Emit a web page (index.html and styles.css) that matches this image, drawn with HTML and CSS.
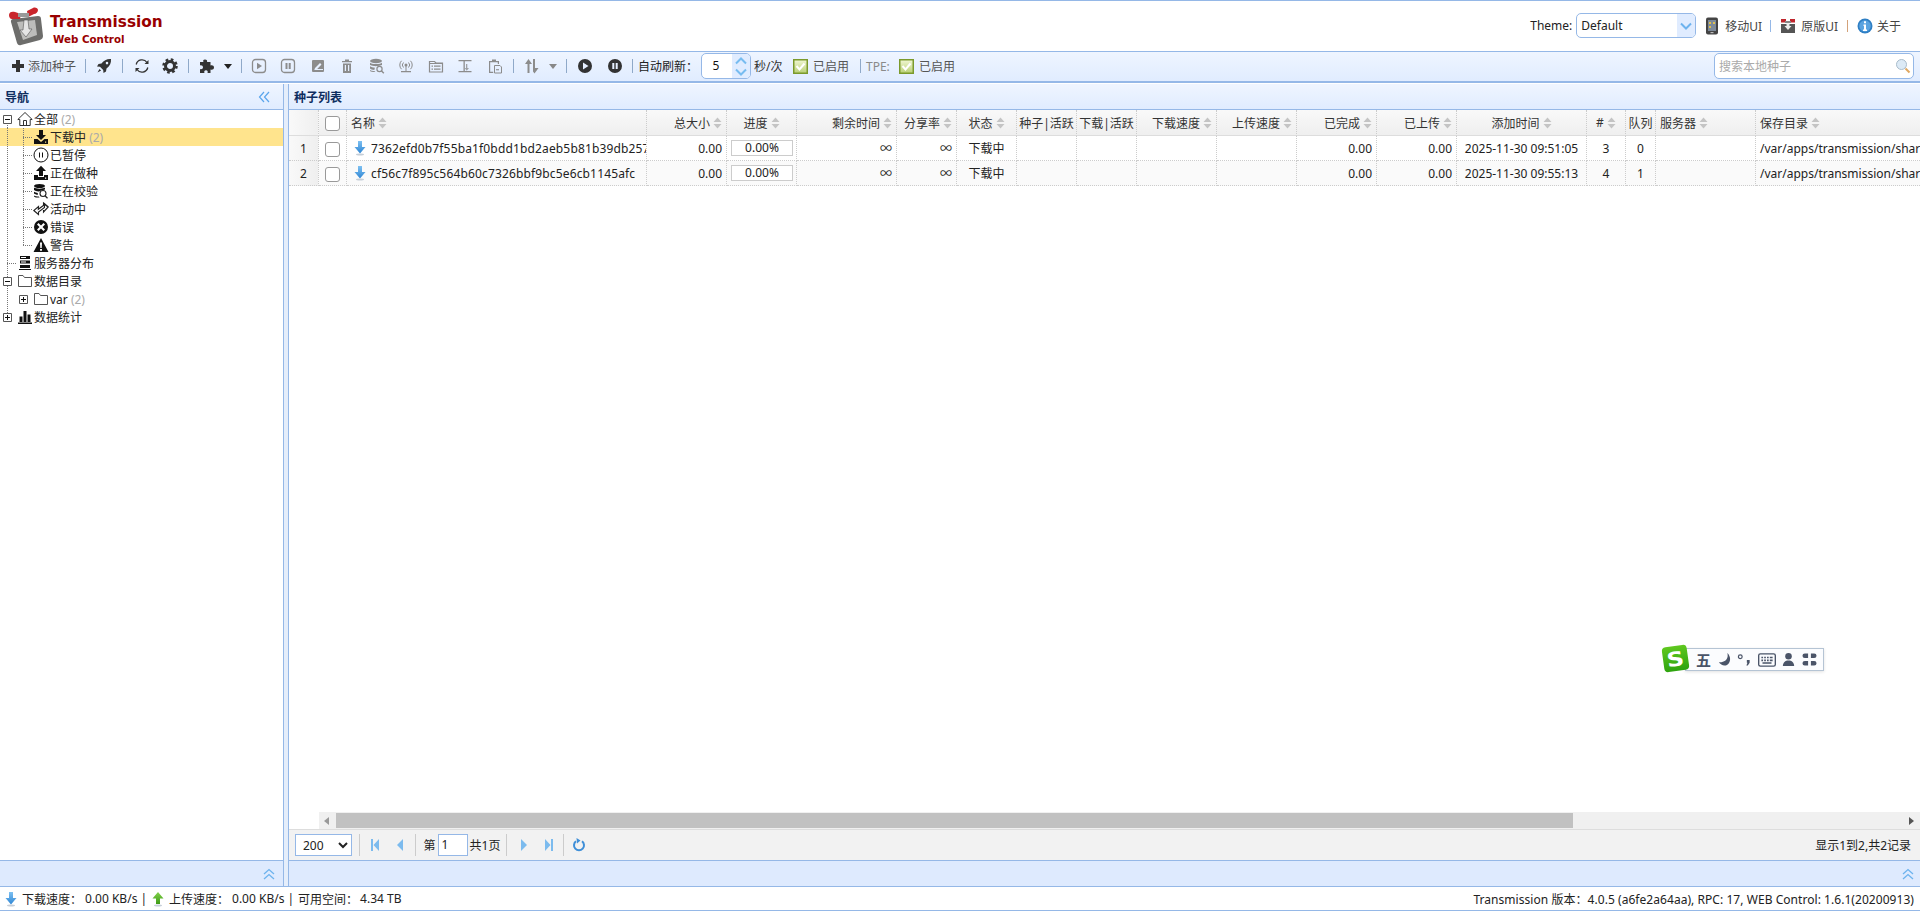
FILE: index.html
```html
<!DOCTYPE html>
<html lang="zh">
<head>
<meta charset="utf-8">
<title>Transmission Web Control</title>
<link rel="stylesheet" href="styles.css">
</head>
<body>
<svg class="defs" width="0" height="0">
  <defs>
    <symbol id="i-plus" viewBox="0 0 16 16"><path d="M6 2h4v4h4v4h-4v4H6v-4H2V6h4z"/></symbol>
    <symbol id="i-rocket" viewBox="0 0 16 16"><path d="M15 1c-4-.3-7 1.200-9.500 4.500L2.500 6 1 8.500l3 .3 3.200 3.200.3 3L10 13.500l.5-3C14 8 15.300 5 15 1zM11 3.800a1.300 1.300 0 1 1 0 2.600 1.300 1.300 0 0 1 0-2.600zM3.500 11l1.600 1.600-3.600 2z"/></symbol>
    <symbol id="i-refresh" viewBox="0 0 16 16"><path d="M2.200 6.500A6 6 0 0 1 13 4.500M13.800 9.500A6 6 0 0 1 3 11.500" fill="none" stroke="currentColor" stroke-width="1.300"/><path d="M14.500 2v4h-4zM1.500 14v-4h4z"/></symbol>
    <symbol id="i-gear" viewBox="0 0 16 16"><circle cx="8" cy="8" r="4.500" fill="none" stroke="currentColor" stroke-width="3"/><circle cx="8" cy="8" r="6.500" fill="none" stroke="currentColor" stroke-width="2.500" stroke-dasharray="2.600 2.500"/></symbol>
    <symbol id="i-puzzle" viewBox="0 0 16 16"><path d="M6 1.500c1.800 0 2.500 1 2 2.500h3.500v3.500c1.500-.7 3.500 0 3.500 2s-2 2.700-3.500 2V15H8.500c.7-1.500 0-2.800-1.500-2.800S4.800 13.500 5.500 15H1v-4c1.500.7 3-.2 3-1.700S2.500 7 1 7.500V4h3.500C3.700 2.500 4.300 1.500 6 1.500z"/></symbol>
    <symbol id="i-play-box" viewBox="0 0 16 16"><rect x="1.500" y="1.500" width="13" height="13" rx="3" fill="none" stroke="currentColor" stroke-width="1.300"/><path d="M6 4.800 11 8l-5 3.200z"/></symbol>
    <symbol id="i-pause-box" viewBox="0 0 16 16"><rect x="1.500" y="1.500" width="13" height="13" rx="3" fill="none" stroke="currentColor" stroke-width="1.300"/><path d="M5.500 5h2v6h-2zM8.700 5h2v6h-2z"/></symbol>
    <symbol id="i-edit" viewBox="0 0 16 16"><path d="M3 2h10a1 1 0 0 1 1 1v10a1 1 0 0 1-1 1H3a1 1 0 0 1-1-1V3a1 1 0 0 1 1-1zm7 3L5 10l-.7 2H13v-1H7.200L11.500 6.500z"/></symbol>
    <symbol id="i-trash" viewBox="0 0 16 16"><path d="M3 3h10v1.300H3zM4 5.500h8V15H4zm1.800 1.500v6h1.200V7zm3.200 0v6h1.200V7zM6 1.500h4V3H6z"/></symbol>
    <symbol id="i-db" viewBox="0 0 16 16"><ellipse cx="7" cy="3" rx="6" ry="2.200"/><path d="M1 4.500c1 2 11 2 12 0V7c-1 .5-2 .8-4 1-1.500.2-3 .2-4 0-2-.2-3.200-.6-4-1zM1 8.300c1 .9 3 1.300 5 1.400-.5.800-.7 1.500-.6 2.300-2.200-.2-3.600-.8-4.400-1.500zM1 12c.9.600 2.500 1.100 4.800 1.200l.6.900C4 14.200 2 13.700 1 13z"/><circle cx="10.500" cy="11" r="2.600" fill="none" stroke="currentColor" stroke-width="1.200"/><path d="m12.300 12.800 2.500 2.500" stroke="currentColor" stroke-width="1.400"/></symbol>
    <symbol id="i-antenna" viewBox="0 0 16 16"><circle cx="8" cy="7" r="1.500"/><path d="M5.500 4.500a3.500 3.500 0 0 0 0 5M10.500 4.500a3.500 3.500 0 0 1 0 5M3.500 2.800a6 6 0 0 0 0 8.400M12.500 2.800a6 6 0 0 1 0 8.400" fill="none" stroke="currentColor"/><path d="M7.500 8h1v5h-1zM3 13h10v1.200H3z"/></symbol>
    <symbol id="i-folder-list" viewBox="0 0 16 16"><path d="M1.500 3.500h5l1.500 1.500h6.500v9h-13z" fill="none" stroke="currentColor" stroke-width="1.200"/><path d="M1.500 5h13v1h-13zM3.500 7.500h1.500v1.200H3.500zM6 7.500h6.500v1.200H6zM3.500 10.500h1.500v1.200H3.500zM6 10.500h6.500v1.200H6z"/></symbol>
    <symbol id="i-align" viewBox="0 0 16 16"><path d="M1.500 2h13v1.300h-13zM1.500 13h13v1.300h-13zM6.500 3.300h1.300V13H6.500z"/><path d="M9 6h1.300v4H12l-2.300 2.700L7.800 10H9z" opacity=".8"/></symbol>
    <symbol id="i-paste" viewBox="0 0 16 16"><path d="M5 1.500h4v1.500h3v3h-1.200V4.300H3.200v9.400h3V15H2V3h3z"/><path d="M7.500 7.500h5.500l1.500 1.500v6h-7z" fill="none" stroke="currentColor"/><path d="M9 11.200h3v1.100H9z"/></symbol>
    <symbol id="i-updown" viewBox="0 0 16 16"><path d="M4.500 1 1 6h2.500v9h2V6H8zM9 1h2v9h3.500L10.500 15.500 9 13.500z"/></symbol>
    <symbol id="i-play-round" viewBox="0 0 16 16"><path d="M8 1a7 7 0 1 1 0 14A7 7 0 0 1 8 1zM6 4.500v7L11.500 8z"/></symbol>
    <symbol id="i-pause-round" viewBox="0 0 16 16"><path d="M8 1a7 7 0 1 1 0 14A7 7 0 0 1 8 1zM5.300 5v6h2V5zm3.400 0v6h2V5z"/></symbol>
    <symbol id="i-sort" viewBox="0 0 9 12"><path d="M4.500 0.500 8.500 5h-8zM4.500 11.500.5 7h8z"/></symbol>
    <symbol id="i-arrow" viewBox="0 0 12 16"><defs><linearGradient id="gb" x1="0" x2="0" y1="0" y2="1"><stop offset="0" stop-color="#7ec1f2"/><stop offset="1" stop-color="#2f86d4"/></linearGradient></defs><path d="M4 1h4v6h3.500L6 13.500.5 7H4z" fill="url(#gb)"/><ellipse cx="6" cy="14.500" rx="4" ry="1" fill="#c5ced8"/></symbol>
    <symbol id="i-arrow-up" viewBox="0 0 12 16"><defs><linearGradient id="gg" x1="0" x2="0" y1="0" y2="1"><stop offset="0" stop-color="#83d24b"/><stop offset="1" stop-color="#3e9b17"/></linearGradient></defs><path d="M6 1l5.500 6.500H8V13H4V7.500H.5z" fill="url(#gg)"/><ellipse cx="6" cy="14.500" rx="4" ry="1" fill="#c5ced8"/></symbol>
    <symbol id="i-double-left" viewBox="0 0 12 12"><path d="M6 1 1.500 6 6 11M11 1 6.500 6l4.500 5" fill="none" stroke="currentColor" stroke-width="1.200"/></symbol>
    <symbol id="i-double-up" viewBox="0 0 12 12"><path d="M1 6 6 1.500 11 6M1 11l5-4.500 5 4.500" fill="none" stroke="currentColor" stroke-width="1.300"/></symbol>
    <symbol id="i-home" viewBox="0 0 16 16"><path d="M8 1.500.8 8.500h2V14.500h10.400V8.500h2zM6.500 14.500v-5h3v5" fill="none" stroke="#333" stroke-width="1"/></symbol>
    <symbol id="i-download" viewBox="0 0 16 16"><path d="M6 1h4v5h3L8 11 3 6h3zM1 10h3.500L8 13l3.500-3H15v5H1zm11 2.500v1.200h1.200v-1.200z"/></symbol>
    <symbol id="i-pause-o" viewBox="0 0 16 16"><circle cx="8" cy="8" r="7" fill="none" stroke="#111" stroke-width="1"/><path d="M6 5.500h1v5H6zM9 5.500h1v5H9z"/></symbol>
    <symbol id="i-upload" viewBox="0 0 16 16"><path d="M8 0.800 13 6h-3v5H6V6H3zM1 10h4v2h6v-2h4v5H1zm11 2.500v1.200h1.200v-1.200z"/></symbol>
    <symbol id="i-check-db" viewBox="0 0 16 16"><ellipse cx="6.500" cy="3" rx="5.500" ry="2"/><path d="M1 4.500c1.500 1.500 9.500 1.500 11 0v2c-1 .5-2.500.8-4 .9-1.400.8-2 1.300-2.500 1.100C3.500 8.400 2 7.800 1 7zM1 8.800c1 .6 2.300 1 3.800 1.100-.1.700 0 1.300.2 1.900-1.800-.1-3.200-.6-4-1.300zM1 12.500c1 .6 2.700 1 4.800 1l.8 1.100c-2.700.1-4.600-.3-5.600-1.200z"/><circle cx="10" cy="10.500" r="3" fill="none" stroke="#222" stroke-width="1.100"/><path d="m12 12.700 2.500 2.500" stroke="#222" stroke-width="1.300"/></symbol>
    <symbol id="i-exchange" viewBox="0 0 16 16"><path d="M.8 9.500 5.500 13.500V11l6-4.500V3.700L5.300 8.300 5.500 5.500zM15.200 6 10.500 2v2.500" fill="none" stroke="#222" stroke-width="1.100"/><path d="M10.500 2 15.200 6l-4.700 5v-2" fill="none" stroke="#222" stroke-width="1.100"/></symbol>
    <symbol id="i-error" viewBox="0 0 16 16"><path d="M8 1a7 7 0 1 1 0 14A7 7 0 0 1 8 1zM5.500 4 4 5.500 6.500 8 4 10.500 5.500 12 8 9.500 10.500 12 12 10.500 9.500 8 12 5.500 10.500 4 8 6.500z"/></symbol>
    <symbol id="i-warn" viewBox="0 0 16 16"><path d="M8 1 15.500 15H.5zM7 5.500l.3 5.500h1.400L9 5.500zM7 12v1.800h2V12z"/></symbol>
    <symbol id="i-server" viewBox="0 0 16 16"><path d="M3 1h10v3H3zM3 5.500h10v3H3zM3 10h10v3H3zM2 14h12v1H2z"/><path d="M4 6.500h5v1H4zM4 2h5v1H4z" fill="#fff"/></symbol>
    <symbol id="i-folder" viewBox="0 0 16 16"><path d="M1.500 2.500h4.500l1.500 2h7v9h-13z" fill="#fff" stroke="#555" stroke-width="1"/></symbol>
    <symbol id="i-chart" viewBox="0 0 16 16"><path d="M1 13.500h14V15H1zM2.500 7.500h3V13h-3zM6.500 2h3v11h-3zM10.500 5.500h3V13h-3z"/></symbol>
    <symbol id="i-minus-box" viewBox="0 0 9 9"><path d="M.5.500h8v8h-8z" fill="#fff" stroke="#555"/><path d="M2 4h5v1H2z" fill="#111"/></symbol>
    <symbol id="i-plus-box" viewBox="0 0 9 9"><path d="M.5.500h8v8h-8z" fill="#fff" stroke="#555"/><path d="M2 4h5v1H2zM4 2h1v5H4z" fill="#111"/></symbol>
    <symbol id="i-check" viewBox="0 0 15 15"><defs><linearGradient id="gc" x1="0" x2="0" y1="0" y2="1"><stop offset="0" stop-color="#eef5cf"/><stop offset="1" stop-color="#bcd27a"/></linearGradient></defs><rect width="15" height="15" fill="#7b9a2c"/><rect x="1.500" y="1.500" width="12" height="12" fill="url(#gc)"/><path d="M3.500 7 6.500 10.500 11.500 4.500" fill="none" stroke="#fff" stroke-width="2"/></symbol>
    <symbol id="i-first" viewBox="0 0 10 14"><path d="M1 1h2v12H1zM9 1v12L3.500 7z"/></symbol>
    <symbol id="i-prev" viewBox="0 0 10 14"><path d="M8 1v12L2 7z"/></symbol>
    <symbol id="i-next" viewBox="0 0 10 14"><path d="M2 1v12l6-6z"/></symbol>
    <symbol id="i-last" viewBox="0 0 10 14"><path d="M9 1H7v12h2zM1 1v12l5.500-6z"/></symbol>
    <symbol id="i-reload" viewBox="0 0 14 14"><path d="M4 3.300a5 5 0 1 0 6 0" fill="none" stroke="currentColor" stroke-width="2"/><path d="M4.500 0l4 2.500-3.500 3z"/></symbol>
    <symbol id="i-search" viewBox="0 0 16 16"><circle cx="6.500" cy="6.500" r="5" fill="#dceaf6" stroke="#a9bccb"/><path d="m10.500 10.500 4 4" stroke="#e0a860" stroke-width="2"/></symbol>
    <symbol id="i-chevron" viewBox="0 0 12 8"><path d="M1 1.500 6 6.500 11 1.500" fill="none" stroke="currentColor" stroke-width="2"/></symbol>
    <symbol id="i-mobile" viewBox="0 0 14 18"><rect x="1" y="0.500" width="12" height="17" rx="2" fill="#444"/><rect x="3" y="3" width="8" height="11" fill="#7d8a99"/><path d="M4 5h2v2H4zM8 5h2v2H8zM4 9h2v2H4z" fill="#e0c050"/><rect x="5.500" y="15" width="3" height="1.200" fill="#bbb"/></symbol>
    <symbol id="i-original" viewBox="0 0 16 16"><path d="M1 6h14v9H1z" fill="#555"/><path d="M1 1h5v3.500H1zM10 1h5v3.500h-5z" fill="#c0272d"/><path d="M5 3h6v2H5z" fill="#888"/><path d="M6.500 5h3v3h2L8 12 4.500 8h2z" fill="#eee"/></symbol>
    <symbol id="i-info" viewBox="0 0 16 16"><circle cx="8" cy="8" r="7.500" fill="#2f7fc4"/><circle cx="8" cy="8" r="5.800" fill="#5aa3e0"/><path d="M7 3.200h2v2H7zM6.500 6.500H9V11.500h1V13H6V11.500h1V8H6.500z" fill="#fff"/></symbol>
    <symbol id="i-logo" viewBox="0 0 36 40"><path d="M5 12 30 9c2 0 3 1 3 3l2 17c0 2-1 3-3 4l-19 5c-2 .5-3 0-4-2L3 15c-.5-1.500.5-3 2-3z" fill="#6d6d6b"/><path d="M9 15 27 13l2 15-14 5z" fill="#bdbdbb"/><path d="M16 13h4l1 9h3l-6 8-6-7h3z" fill="#e5e5e5" stroke="#555" stroke-width=".6"/><path d="M1 8c0-3 3-4 6-3l6 2-1 5-8 0C2 12 1 10 1 8zM19 4l6-3c2-1 5 0 5 2s-2 4-4 4l-6 3z" fill="#c9252b"/><path d="M10 6h11v4H10z" fill="#999"/></symbol>
    <symbol id="s-moon" viewBox="0 0 16 16"><path d="M11 1c1.500 5-1 10-9 10 2 3 6 4.500 9 2.500 4-2.500 4-9 0-12.500z"/></symbol>
    <symbol id="s-punct" viewBox="0 0 16 16"><circle cx="3.500" cy="5" r="2" fill="none" stroke="currentColor" stroke-width="1.300"/><path d="M10.500 8.500h3v3l-2 3h-1.500l1.200-3h-.7z"/></symbol>
    <symbol id="s-keys" viewBox="0 0 16 16"><rect x="0.600" y="2.600" width="14.800" height="10.800" rx="1.500" fill="none" stroke="currentColor" stroke-width="1.200"/><path d="M3 5h1.500v1.500H3zM5.500 5H7v1.500H5.500zM8 5h1.500v1.500H8zM10.500 5H13v1.500h-2.500zM3 7.500h1.500V9H3zM5.500 7.500H7V9H5.500zM8 7.500h1.500V9H8zM10.500 7.500H13V9h-2.500zM4 10h8v1.300H4z"/></symbol>
    <symbol id="s-user" viewBox="0 0 16 16"><circle cx="8" cy="4.500" r="3.500"/><path d="M2 15c0-4 2.500-6 6-6s6 2 6 6z"/></symbol>
    <symbol id="s-apps" viewBox="0 0 16 16"><path d="M3 1.500h3.500v5H3A2.500 2.500 0 0 1 3 1.500zM9.500 1.500H13a2.500 2.500 0 0 1 0 5H9.500zM3 9.500h3.500v5H3a2.500 2.500 0 0 1 0-5zM9.500 9.500H13a2.500 2.500 0 0 1 0 5H9.500z"/></symbol>
  </defs>
</svg>

<div class="app">
  <header class="top">
    <div class="brand">
      <svg class="logo"><use href="#i-logo"/></svg>
      <div class="brand-text">
        <div class="brand-name">Transmission</div>
        <div class="brand-sub">Web Control</div>
      </div>
    </div>
    <div class="top-right">
      <span class="theme-label">Theme:</span>
      <div class="combo"><span class="combo-text">Default</span><span class="combo-arrow"><svg class="chev"><use href="#i-chevron"/></svg></span></div>
      <svg class="ic-mobile"><use href="#i-mobile"/></svg><span class="top-link t-mobile">移动UI</span>
      <span class="top-sep sep-a"></span>
      <svg class="ic-orig"><use href="#i-original"/></svg><span class="top-link t-orig">原版UI</span>
      <span class="top-sep sep-orange"></span>
      <svg class="ic-info"><use href="#i-info"/></svg><span class="top-link t-about">关于</span>
    </div>
  </header>

  <div class="toolbar">
    <div class="tb-add"><svg class="ic dark ic-plus"><use href="#i-plus"/></svg><span>添加种子</span></div>
    <i class="sep"></i>
    <div class="btn w36"><svg class="ic dark"><use href="#i-rocket"/></svg></div>
    <i class="sep"></i>
    <div class="btn w37"><svg class="ic dark"><use href="#i-refresh"/></svg></div>
    <div class="btn w20 mr8"><svg class="ic dark"><use href="#i-gear"/></svg></div>
    <i class="sep"></i>
    <div class="group"><svg class="ic dark"><use href="#i-puzzle"/></svg><span class="caret"></span></div>
    <i class="sep"></i>
    <div class="disabled-set">
      <div class="btn w295"><svg class="ic off"><use href="#i-play-box"/></svg></div>
      <div class="btn w295"><svg class="ic off"><use href="#i-pause-box"/></svg></div>
      <div class="btn w295"><svg class="ic off"><use href="#i-edit"/></svg></div>
      <div class="btn w295"><svg class="ic off"><use href="#i-trash"/></svg></div>
      <div class="btn w295"><svg class="ic off"><use href="#i-db"/></svg></div>
      <div class="btn w295"><svg class="ic off"><use href="#i-antenna"/></svg></div>
      <div class="btn w295"><svg class="ic off"><use href="#i-folder-list"/></svg></div>
      <div class="btn w295"><svg class="ic off"><use href="#i-align"/></svg></div>
      <div class="btn w295"><svg class="ic off"><use href="#i-paste"/></svg></div>
    </div>
    <i class="sep"></i>
    <div class="group"><svg class="ic off"><use href="#i-updown"/></svg><span class="caret caret-off"></span></div>
    <i class="sep"></i>
    <div class="round-set">
      <div class="btn w30"><svg class="ic dark"><use href="#i-play-round"/></svg></div>
      <div class="btn w30"><svg class="ic dark"><use href="#i-pause-round"/></svg></div>
    </div>
    <i class="sep"></i>
    <span class="lbl-auto">自动刷新：</span>
    <div class="spinner"><span class="spin-val">5</span><span class="spin-btns"><svg class="spin-up"><use href="#i-chevron"/></svg><svg class="spin-dn"><use href="#i-chevron"/></svg></span></div>
    <span class="lbl-sec">秒/次</span>
    <svg class="chk chk-a"><use href="#i-check"/></svg><span class="lbl-on">已启用</span>
    <i class="sep sep-tpe"></i>
    <span class="lbl-tpe">TPE:</span>
    <svg class="chk chk-b"><use href="#i-check"/></svg><span class="lbl-on">已启用</span>
    <div class="search"><span class="search-ph">搜索本地种子</span><svg class="ic-search"><use href="#i-search"/></svg></div>
  </div>

  <div class="main">
    <aside class="nav">
      <div class="panel-title nav-title"><span>导航</span><svg class="ic-collapse"><use href="#i-double-left"/></svg></div>
      <div class="tree">
        <div class="node"><span class="hit vd hd-half"><svg class="box"><use href="#i-minus-box"/></svg></span><svg class="ti"><use href="#i-home"/></svg><span class="tx">全部 <em>(2)</em></span></div>
        <div class="node active"><span class="hit vd"></span><span class="hit vd hj"></span><svg class="ti"><use href="#i-download"/></svg><span class="tx">下载中 <em>(2)</em></span></div>
        <div class="node"><span class="hit vd"></span><span class="hit vd hj"></span><svg class="ti"><use href="#i-pause-o"/></svg><span class="tx">已暂停</span></div>
        <div class="node"><span class="hit vd"></span><span class="hit vd hj"></span><svg class="ti"><use href="#i-upload"/></svg><span class="tx">正在做种</span></div>
        <div class="node"><span class="hit vd"></span><span class="hit vd hj"></span><svg class="ti"><use href="#i-check-db"/></svg><span class="tx">正在校验</span></div>
        <div class="node"><span class="hit vd"></span><span class="hit vd hj"></span><svg class="ti"><use href="#i-exchange"/></svg><span class="tx">活动中</span></div>
        <div class="node"><span class="hit vd"></span><span class="hit vd hj"></span><svg class="ti"><use href="#i-error"/></svg><span class="tx">错误</span></div>
        <div class="node"><span class="hit vd"></span><span class="hit vhalf hj"></span><svg class="ti"><use href="#i-warn"/></svg><span class="tx">警告</span></div>
        <div class="node"><span class="hit vd hj"></span><svg class="ti"><use href="#i-server"/></svg><span class="tx">服务器分布</span></div>
        <div class="node"><span class="hit vd"><svg class="box"><use href="#i-minus-box"/></svg></span><svg class="ti"><use href="#i-folder"/></svg><span class="tx">数据目录</span></div>
        <div class="node"><span class="hit vd"></span><span class="hit"><svg class="box"><use href="#i-plus-box"/></svg></span><svg class="ti"><use href="#i-folder"/></svg><span class="tx">var <em>(2)</em></span></div>
        <div class="node"><span class="hit vhalf"><svg class="box"><use href="#i-plus-box"/></svg></span><svg class="ti"><use href="#i-chart"/></svg><span class="tx">数据统计</span></div>
      </div>
    </aside>
    <div class="splitter"></div>
    <section class="content">
      <div class="panel-title"><span>种子列表</span></div>
      <div class="grid-wrap">
        <table class="grid">
          <colgroup>
            <col class="c30"><col class="c27"><col class="c300"><col class="c80"><col class="c70"><col class="c100"><col class="c60"><col class="c60"><col class="c60"><col class="c60"><col class="c80"><col class="c80"><col class="c80"><col class="c80"><col class="c130"><col class="c40"><col class="c30"><col class="c100"><col class="c350">
          </colgroup>
          <thead>
            <tr>
              <th class="rn"></th>
              <th class="cb"><span class="check"></span></th>
              <th class="l"><span class="h">名称<svg class="sort"><use href="#i-sort"/></svg></span></th>
              <th class="r"><span class="h">总大小<svg class="sort"><use href="#i-sort"/></svg></span></th>
              <th class="m"><span class="h">进度<svg class="sort"><use href="#i-sort"/></svg></span></th>
              <th class="r"><span class="h">剩余时间<svg class="sort"><use href="#i-sort"/></svg></span></th>
              <th class="r"><span class="h">分享率<svg class="sort"><use href="#i-sort"/></svg></span></th>
              <th class="m"><span class="h">状态<svg class="sort"><use href="#i-sort"/></svg></span></th>
              <th class="m tight">种子|活跃</th>
              <th class="m tight">下载|活跃</th>
              <th class="r"><span class="h">下载速度<svg class="sort"><use href="#i-sort"/></svg></span></th>
              <th class="r"><span class="h">上传速度<svg class="sort"><use href="#i-sort"/></svg></span></th>
              <th class="r"><span class="h">已完成<svg class="sort"><use href="#i-sort"/></svg></span></th>
              <th class="r"><span class="h">已上传<svg class="sort"><use href="#i-sort"/></svg></span></th>
              <th class="m"><span class="h">添加时间<svg class="sort"><use href="#i-sort"/></svg></span></th>
              <th class="m"><span class="h">#<svg class="sort"><use href="#i-sort"/></svg></span></th>
              <th class="m tight">队列</th>
              <th class="l"><span class="h">服务器<svg class="sort"><use href="#i-sort"/></svg></span></th>
              <th class="l"><span class="h">保存目录<svg class="sort"><use href="#i-sort"/></svg></span></th>
            </tr>
          </thead>
          <tbody>
            <tr>
              <td class="rn">1</td><td class="cb"><span class="check"></span></td>
              <td class="l flush"><span class="name"><svg class="row-arrow"><use href="#i-arrow"/></svg><span class="name-text">7362efd0b7f55ba1f0bdd1bd2aeb5b81b39db257a</span></span></td>
              <td class="r">0.00</td><td class="m"><span class="progress">0.00%</span></td><td class="r">∞</td><td class="r">∞</td><td class="m">下载中</td><td></td><td></td><td></td><td></td><td class="r">0.00</td><td class="r">0.00</td><td class="m">2025-11-30 09:51:05</td><td class="m">3</td><td class="m">0</td><td></td><td class="l">/var/apps/transmission/shared/downloads</td>
            </tr>
            <tr class="even">
              <td class="rn">2</td><td class="cb"><span class="check"></span></td>
              <td class="l flush"><span class="name"><svg class="row-arrow"><use href="#i-arrow"/></svg><span class="name-text">cf56c7f895c564b60c7326bbf9bc5e6cb1145afc</span></span></td>
              <td class="r">0.00</td><td class="m"><span class="progress">0.00%</span></td><td class="r">∞</td><td class="r">∞</td><td class="m">下载中</td><td></td><td></td><td></td><td></td><td class="r">0.00</td><td class="r">0.00</td><td class="m">2025-11-30 09:55:13</td><td class="m">4</td><td class="m">1</td><td></td><td class="l">/var/apps/transmission/shared/downloads</td>
            </tr>
          </tbody>
        </table>
      </div>
      <div class="hscroll">
        <div class="track"><span class="arr-l"></span><span class="thumb"></span><span class="arr-r"></span></div>
      </div>
      <div class="pager">
        <select class="page-size"><option>200</option></select>
        <i class="psep s1"></i>
        <svg class="pg pg-a"><use href="#i-first"/></svg>
        <svg class="pg pg-b"><use href="#i-prev"/></svg>
        <i class="psep s2"></i>
        <span class="pt-a">第</span><span class="page-input">1</span><span class="pt-b">共1页</span>
        <i class="psep s3"></i>
        <svg class="pg pg-c"><use href="#i-next"/></svg>
        <svg class="pg pg-d"><use href="#i-last"/></svg>
        <i class="psep s4"></i>
        <svg class="pg-reload"><use href="#i-reload"/></svg>
        <span class="page-info">显示1到2,共2记录</span>
      </div>
    </section>
  </div>

  <div class="bottoms">
    <div class="bot bot-l"><svg class="ic-up"><use href="#i-double-up"/></svg></div>
    <div class="bot-gap"></div>
    <div class="bot bot-r"><svg class="ic-up"><use href="#i-double-up"/></svg></div>
  </div>

  <footer class="status">
    <svg class="st-arrow"><use href="#i-arrow"/></svg>
    <span class="st-a">下载速度：</span><span class="st-v">0.00 KB/s</span><span class="st-s">|</span>
    <svg class="st-arrow st-green"><use href="#i-arrow-up"/></svg>
    <span class="st-a">上传速度：</span><span class="st-v">0.00 KB/s</span><span class="st-s">|</span>
    <span class="st-a st-c">可用空间：</span><span class="st-v st-w">4.34 TB</span>
    <span class="st-right">Transmission 版本：4.0.5 (a6fe2a64aa), RPC: 17, WEB Control: 1.6.1(20200913)</span>
  </footer>
</div>

<div class="ime">
  <span class="ime-logo"><span>S</span></span>
  <span class="ime-wu">五</span>
  <svg class="ime-ic"><use href="#s-moon"/></svg>
  <svg class="ime-ic"><use href="#s-punct"/></svg>
  <svg class="ime-ic ime-keys"><use href="#s-keys"/></svg>
  <svg class="ime-ic"><use href="#s-user"/></svg>
  <svg class="ime-ic"><use href="#s-apps"/></svg>
</div>
</body>
</html>
```

FILE: styles.css
```css
* { box-sizing: border-box; }
html, body { margin: 0; height: 100%; overflow: hidden; }
body {
  font-family: "Noto Sans", "Noto Sans CJK SC", sans-serif;
  font-size: 12px;
  color: #222;
  background: #fff;
}
.defs { position: absolute; }
.app { display: flex; flex-direction: column; height: 911px; width: 1920px; }

/* top header */
.top {
  height: 52px; flex: none; display: flex; justify-content: space-between;
  border-top: 1px solid #95b8e7; border-bottom: 1px solid #95b8e7; background: #fff;
}
.brand { display: flex; padding: 6px 0 0 8px; }
.logo { width: 36px; height: 40px; }
.brand-text { margin-left: 6px; padding-top: 4px; }
.brand-name { font-family: "DejaVu Sans", sans-serif; font-weight: 700; font-size: 15.3px; line-height: 20px; color: #990000; margin-top: 1px; }
.brand-sub { font-family: "DejaVu Sans", sans-serif; font-weight: 700; font-size: 10.3px; line-height: 14px; color: #990000; margin-left: 3px; }
.top-right { display: flex; align-items: center; padding-bottom: 1px; }
.theme-label { margin-right: 4px; }
.combo { width: 120px; height: 25px; border: 1px solid #95b8e7; border-radius: 5px; display: flex; overflow: hidden; background: #fff; }
.combo-text { flex: 1; padding-left: 4px; line-height: 23px; font-size: 12px; color: #222; }
.combo-arrow { width: 18px; background: #e0ecff; display: flex; align-items: center; justify-content: center; color: #6db3ee; }
.chev { width: 12px; height: 8px; }
.ic-mobile { width: 14px; height: 18px; margin-left: 9px; }
.top-link { color: #444; }
.t-mobile { margin-left: 6px; }
.top-sep { width: 1px; height: 12px; background: #95b8e7; margin: 0 9px; }
.sep-a { margin: 0 9px 0 8px; }
.sep-orange { background: #d3a27a; }
.ic-orig { width: 16px; height: 16px; }
.t-orig { margin-left: 5px; }
.ic-info { width: 16px; height: 16px; }
.t-about { margin: 0 19px 0 4px; }

/* toolbar */
.toolbar {
  height: 31px; flex: none; display: flex; align-items: center; padding-bottom: 1px;
  background: linear-gradient(#eff5ff, #e0ecff); border-bottom: 2px solid #95b8e7; color: #333;
}
.tb-add { width: 85px; padding-left: 10px; display: flex; align-items: center; color: #555; }
.ic { width: 16px; height: 16px; display: block; }
.ic-plus { margin-right: 2px; }
.dark { color: #333; fill: #333; }
.off { color: #8c8c8c; fill: #8c8c8c; }
.sep { display: block; width: 1px; height: 14px; background: #8fa9c9; flex: none; }
.btn { display: flex; justify-content: center; flex: none; }
.w36 { width: 36px; } .w37 { width: 37px; } .w20 { width: 20px; } .mr8 { margin-right: 8px; }
.w30 { width: 30px; } .w295 { width: 29.5px; }
.group { width: 52px; display: flex; align-items: center; padding-left: 10px; flex: none; }
.caret { width: 0; height: 0; margin-left: 9px; border: 4px solid transparent; border-top: 5px solid #222; border-bottom: 0; }
.caret-off { border-top-color: #888; }
.disabled-set { display: flex; padding-left: 2px; width: 271px; flex: none; }
.round-set { display: flex; padding-left: 3px; width: 65px; flex: none; }
.lbl-auto { margin-left: 5px; width: 63px; flex: none; color: #222; }
.spinner { width: 50px; height: 26px; flex: none; border: 1px solid #95b8e7; border-radius: 5px; display: flex; overflow: hidden; background: #fff; }
.spin-val { flex: 1; text-align: center; line-height: 24px; color: #111; padding-right: 2px; }
.spin-btns { width: 18px; background: #e0ecff; display: flex; flex-direction: column; align-items: center; justify-content: center; gap: 3px; color: #77bcf0; }
.spin-up { width: 12px; height: 8px; transform: scaleY(-1); }
.spin-dn { width: 12px; height: 8px; }
.lbl-sec { margin-left: 3px; width: 39px; flex: none; color: #333; }
.chk { width: 15px; height: 15px; flex: none; }
.lbl-on { margin-left: 5px; color: #555; width: 36px; flex: none; }
.sep-tpe { margin-left: 11px; }
.lbl-tpe { margin-left: 5px; color: #8a8a8a; width: 33px; flex: none; }
.search { margin-left: auto; margin-right: 6px; width: 200px; height: 26px; background: #fff; border: 1px solid #95b8e7; border-radius: 5px; display: flex; align-items: center; justify-content: space-between; padding: 0 2px 0 4px; }
.search-ph { color: #aaa; }
.ic-search { width: 16px; height: 16px; }

/* main */
.main { flex: 1; display: flex; min-height: 0; padding-top: 1px; background: #fff; }
.nav { width: 284px; flex: none; display: flex; flex-direction: column; border-right: 1px solid #95b8e7; }
.panel-title {
  height: 26px; flex: none; display: flex; align-items: center; justify-content: space-between;
  padding: 0 5px; font-weight: 700; color: #0e2d5f; font-size: 12px;
  background: linear-gradient(#eff5ff, #e0ecff); border-bottom: 1px solid #95b8e7;
}
.nav-title { padding-right: 13px; }
.ic-collapse { width: 12px; height: 12px; color: #5aa5ec; }
.tree { flex: 1; background: #fff; }
.node { height: 18px; display: flex; align-items: center; }
.node.active { background: #ffe48d; }
.hit { width: 16px; height: 18px; flex: none; display: flex; align-items: center; justify-content: flex-start; padding-left: 3px; }
.vd { background: repeating-linear-gradient(#777 0 1px, transparent 1px 2px) 7px 0 / 1px 100% no-repeat; }
.vhalf { background: repeating-linear-gradient(#777 0 1px, transparent 1px 2px) 7px 0 / 1px 9px no-repeat; }
.hj { background-image: repeating-linear-gradient(#777 0 1px, transparent 1px 2px), repeating-linear-gradient(90deg, #777 0 1px, transparent 1px 2px); background-position: 7px 0, 7px 9px; background-size: 1px 100%, 9px 1px; background-repeat: no-repeat; }
.vhalf.hj { background-size: 1px 9px, 9px 1px; }
.hd-half { background-size: 1px 9px; background-position: 7px 9px; }
.box { width: 9px; height: 9px; display: block; }
.ti { width: 16px; height: 16px; flex: none; fill: #111; margin-left: 1px; }
.tx { margin-left: 1px; color: #222; white-space: nowrap; }
.tx em { font-style: normal; color: #aaa; }
.splitter { width: 4px; flex: none; background: #e5eefb; }

.content { flex: 1; min-width: 0; display: flex; flex-direction: column; border-left: 1px solid #95b8e7; }
.grid-wrap { flex: 1; min-height: 0; overflow: hidden; background: #fff; }
.grid { table-layout: fixed; border-collapse: separate; border-spacing: 0; width: 1817px; }
.c27 { width: 28px; } .c30 { width: 30px; } .c40 { width: 39px; } .c60 { width: 60px; } .c70 { width: 70px; }
.c80 { width: 80px; } .c100 { width: 100px; } .c130 { width: 130px; } .c300 { width: 300px; } .c350 { width: 350px; }
.grid th, .grid td { border-right: 1px dotted #ccc; border-bottom: 1px dotted #ccc; padding: 0 4px; white-space: nowrap; overflow: hidden; font-weight: 400; }
.grid th { height: 26px; background: linear-gradient(#f9f9f9, #efefef); border-bottom: 1px solid #ddd; color: #333; }
.grid td { height: 25px; color: #222; }
.grid td.flush { padding-right: 0; }
.even td { background: #fafafa; }
.grid .rn { background: linear-gradient(90deg, #f9f9f9, #efefef); text-align: center; }
.grid .cb { text-align: center; padding: 0; }
.l { text-align: left; } .r { text-align: right; } .m { text-align: center; }
.grid th.tight { padding: 0; }
.h { display: inline-flex; align-items: center; }
.sort { width: 9px; height: 12px; fill: #c4c4c4; margin-left: 3px; }
.check { display: inline-block; width: 15px; height: 15px; border: 1px solid #999; border-radius: 3px; background: #fff; vertical-align: middle; }
.name { display: flex; align-items: center; padding-left: 3px; overflow: hidden; }
.row-arrow { width: 12px; height: 16px; flex: none; margin-right: 5px; }
.name-text { overflow: hidden; white-space: nowrap; letter-spacing: .15px; }
.progress { display: block; height: 16px; line-height: 14px; border: 1px solid #ccc; text-align: center; background: #fff; margin-right: -1px; }

.hscroll { height: 17px; flex: none; padding-left: 30px; background: #fff; }
.track { height: 100%; background: #f0f0f0; display: flex; align-items: center; }
.arr-l, .arr-r { width: 0; height: 0; border: 4px solid transparent; flex: none; }
.arr-l { border-right: 5px solid #999; border-left: 0; margin-left: 5px; }
.arr-r { border-left: 5px solid #555; border-right: 0; margin-left: auto; margin-right: 6px; }
.thumb { width: 1237px; height: 15px; background: #c1c1c1; margin-left: 7px; }

.pager { height: 31px; flex: none; display: flex; align-items: center; background: #f2f2f2; border-top: 1px solid #ddd; padding-left: 6px; color: #222; }
.page-size { width: 57px; height: 22px; border: 1px solid #95b8e7; background: #fff; font: inherit; padding-left: 3px; border-radius: 0; color: #222; }
.psep { display: block; width: 1px; height: 22px; background: #ccc; flex: none; }
.s1 { margin-left: 7px; }
.pg { width: 10px; height: 14px; fill: #7cbbee; flex: none; }
.pg-a { margin-left: 10px; }
.pg-b { margin-left: 15px; }
.s2 { margin-left: 9.5px; }
.pt-a { margin-left: 8px; }
.page-input { width: 30px; height: 22px; border: 1px solid #95b8e7; background: #fff; margin: 0 2px; padding-left: 3px; line-height: 20px; }
.s3 { margin-left: 6px; }
.pg-c { margin-left: 12px; }
.pg-d { margin-left: 15px; }
.s4 { margin-left: 9px; }
.pg-reload { width: 14px; height: 14px; margin-left: 8px; color: #3f8fd8; fill: #3f8fd8; }
.page-info { margin-left: auto; margin-right: 9px; }

/* bottom collapsed panels */
.bottoms { height: 27px; flex: none; display: flex; }
.bot { border-top: 1px solid #95b8e7; border-bottom: 1px solid #95b8e7; background: #deeafe; display: flex; align-items: center; justify-content: flex-end; }
.bot-l { width: 284px; border-right: 1px solid #95b8e7; padding-right: 8px; }
.bot-gap { width: 4px; background: #e5eefb; border-bottom: 1px solid #95b8e7; }
.bot-r { flex: 1; border-left: 1px solid #95b8e7; padding-right: 6px; }
.ic-up { width: 12px; height: 12px; color: #6db3ee; }

/* status */
.status { height: 24px; flex: none; display: flex; align-items: center; padding-left: 5px; border-bottom: 1px solid #95b8e7; color: #222; }
.st-arrow { width: 12px; height: 16px; flex: none; }
.st-a { margin-left: 5px; color: #222; }
.st-c { margin-left: 1px; }
.st-v { margin-left: 3px; }
.st-w { margin-left: 2px; }
.st-s { margin: 0 3px; }
.st-green { margin-left: 2px; }
.st-right { margin-left: auto; margin-right: 6px; letter-spacing: .05px; }

/* floating IME bar */
.ime {
  position: absolute; left: 1685px; top: 648px; width: 139px; height: 23px;
  display: flex; align-items: center; justify-content: space-between; padding: 0 6px 0 10px;
  background: #fbfcfe; border: 1px solid #b5c4d4; box-shadow: 0 1px 3px rgba(0,0,0,.12); color: #4a5468; fill: #4a5468;
}
.ime-logo { position: absolute; left: -23px; top: -3px; width: 25px; height: 25px; background: linear-gradient(#5fc81f, #2ea30f); border-radius: 4px; transform: rotate(-8deg); display: flex; align-items: center; justify-content: center; }
.ime-logo span { color: #fff; font-family: "DejaVu Sans", sans-serif; font-weight: 700; font-size: 20px; line-height: 1; transform: scaleX(1.2); }
.ime-wu { font-size: 15px; font-weight: 700; color: #4a5468; }
.ime-ic { width: 15px; height: 15px; }
.ime-keys { width: 18px; height: 18px; }
```
